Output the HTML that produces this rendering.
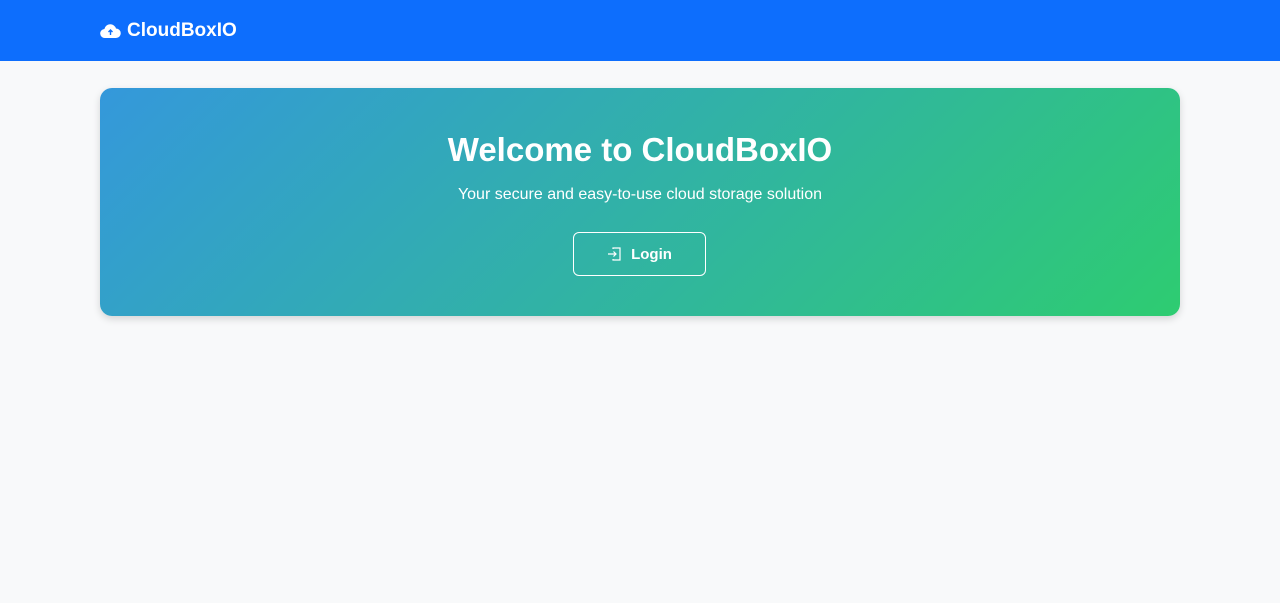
<!DOCTYPE html>
<html><head><meta charset="utf-8"><style>
*{box-sizing:border-box;margin:0;padding:0}
body{width:1280px;height:603px;background:#f8f9fa;font-family:"Liberation Sans",sans-serif;overflow:hidden}
.nav{height:61px;background:#0d6efd;display:flex;align-items:center;padding-left:100px;color:#fff}
.brand{display:flex;align-items:center;font-size:19px;font-weight:600}
.brand svg{margin-right:6px}
.hero{position:absolute;left:100px;top:88px;width:1080px;height:228px;border-radius:12px;background:linear-gradient(135deg,#3498db,#2ecc71);box-shadow:0 3px 8px rgba(0,0,0,.15);color:#fff;text-align:center}
h1{font-size:33px;font-weight:700;margin-top:42px;line-height:40px}
p{font-size:16px;margin-top:16px}
.btn{position:absolute;left:473px;top:144px;width:133px;height:44px;border:1.5px solid #fff;border-radius:6px;display:flex;align-items:center;justify-content:center;font-weight:700;font-size:15px}
.btn svg{margin-right:9px}
</style></head><body>
<div class="nav"><div class="brand"><svg width="21" height="16" viewBox="0 0 21 16"><path d="M5 15a4.5 4.5 0 0 1-.6-9A6 6 0 0 1 16 5.5a4.7 4.7 0 0 1 0 9.5z" fill="#fff"/><path d="M10.5 12V7M8.5 9l2-2 2 2" stroke="#0d6efd" stroke-width="1.4" fill="none"/></svg>CloudBoxIO</div></div>
<div class="hero"><h1>Welcome to CloudBoxIO</h1><p>Your secure and easy-to-use cloud storage solution</p>
<div class="btn"><svg width="15" height="14" viewBox="0 0 15 14" fill="none" stroke="#fff" stroke-width="1.2"><path d="M6 2V1h7v12H6v-1"/><path d="M1 7h8M6.5 4.5 9 7l-2.5 2.5"/></svg>Login</div></div>
</body></html>
